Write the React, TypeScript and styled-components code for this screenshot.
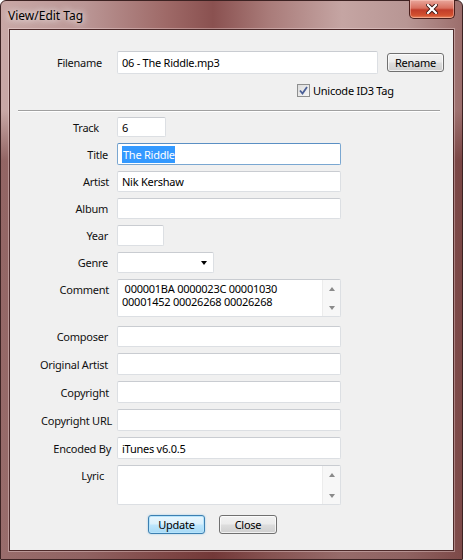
import React from "react";
import styled, { createGlobalStyle, css } from "styled-components";

const GlobalStyle = createGlobalStyle`
  html, body {
    margin: 0;
    padding: 0;
    width: 463px;
    height: 560px;
    overflow: hidden;
    background: #ffffff;
  }
`;

const Window = styled.div`
  width: 463px;
  height: 560px;
  box-sizing: border-box;
  display: flex;
  flex-direction: column;
  padding: 0 8px 8px 8px;
  border: 1px solid #3c2222;
  border-radius: 6px 6px 0 0;
  font-family: "Noto Sans", "Open Sans", sans-serif;
  font-size: 11px;
  color: #000;
  background:
    linear-gradient(180deg, rgba(90, 20, 20, 0) 0px, rgba(90, 20, 20, 0) 110px, rgba(80, 20, 20, 0.45) 160px, rgba(80, 20, 20, 0.4) 100%),
    linear-gradient(90deg, #c9a8a6 0%, #bb9796 18%, #9e6967 36%, #8a5150 46%, #a97b79 58%, #c5a5a3 74%, #b89694 88%, #9c6e6c 100%);
`;

const TitleBar = styled.div`
  height: 28px;
  display: flex;
  justify-content: space-between;
  align-items: flex-start;
  margin-right: -1px;
`;

const Caption = styled.div`
  padding-top: 6px;
  margin-left: -1px;
  font-size: 12px;
  text-shadow: 0 0 6px rgba(255, 255, 255, 0.9), 0 0 10px rgba(255, 255, 255, 0.7);
`;

const CloseButton = styled.div`
  width: 46px;
  height: 19px;
  margin-top: -1px;
  box-sizing: border-box;
  display: flex;
  align-items: center;
  justify-content: center;
  border: 1px solid #4a1f1c;
  border-top: none;
  border-radius: 0 0 5px 5px;
  background: linear-gradient(180deg, #e9a79c 0%, #d8705f 45%, #c13d2a 55%, #d2502f 85%, #e98a5f 100%);
  box-shadow: inset 0 0 0 1px rgba(255, 210, 200, 0.45);
`;

const Client = styled.div`
  flex: 1;
  display: flex;
  flex-direction: column;
  background: #f0f0f0;
  border: 1px solid #4e2a2a;
  box-shadow: 0 0 0 1px rgba(255, 235, 235, 0.35);
  padding-top: 21px;
  letter-spacing: -0.25px;
`;

const Row = styled.div<{ $mt?: number }>`
  display: flex;
  align-items: center;
  margin-top: ${({ $mt = 0 }) => $mt}px;
`;

const TopRow = styled(Row)`
  align-items: flex-start;
`;

const Label = styled.div<{ $pad?: number; $top?: boolean }>`
  width: 102px;
  flex-shrink: 0;
  box-sizing: border-box;
  text-align: right;
  padding-right: ${({ $pad = 0 }) => $pad}px;
  margin-right: 5px;
  white-space: nowrap;
  color: #111;
  ${({ $top }) =>
    $top &&
    css`
      padding-top: 3px;
    `}
`;

const Box = styled.div<{ $w: number; $h: number; $focus?: boolean }>`
  width: ${({ $w }) => $w}px;
  height: ${({ $h }) => $h}px;
  box-sizing: border-box;
  background: #fff;
  border: 1px solid #dcdfe3;
  border-top-color: #c9ccd1;
  border-radius: 2px;
  display: flex;
  align-items: center;
  padding-left: 4px;
  white-space: nowrap;
  overflow: hidden;
  ${({ $focus }) =>
    $focus &&
    css`
      border-color: #7aa7d1;
      border-top-color: #5a8fc4;
    `}
`;

const Selected = styled.span`
  background: #3399ff;
  color: #fff;
  padding: 1px 0 1px 1px;
`;

const Select = styled(Box)`
  justify-content: flex-end;
  padding-right: 6px;
`;

const Memo = styled.div<{ $h: number }>`
  width: 224px;
  height: ${({ $h }) => $h}px;
  box-sizing: border-box;
  background: #fff;
  border: 1px solid #dcdfe3;
  border-top-color: #c9ccd1;
  border-radius: 2px;
  display: flex;
`;

const MemoText = styled.div`
  flex: 1;
  padding: 2px 0 0 4px;
  line-height: 13px;
  white-space: pre;
`;

const ScrollBar = styled.div`
  width: 17px;
  display: flex;
  flex-direction: column;
  justify-content: space-between;
  align-items: center;
  padding: 7px 0 6px;
  background: #f7f7f7;
  border-left: 1px solid #ececec;
`;

const Arrow = styled.div<{ $down?: boolean; $dark?: boolean }>`
  width: 0;
  height: 0;
  border-left: 3.5px solid transparent;
  border-right: 3.5px solid transparent;
  ${({ $down, $dark }) =>
    $down
      ? css`
          border-top: 4px solid ${$dark ? "#000" : "#8a8a8a"};
        `
      : css`
          border-bottom: 4px solid ${$dark ? "#000" : "#8a8a8a"};
        `}
`;

const Button = styled.div<{ $w: number; $default?: boolean }>`
  width: ${({ $w }) => $w}px;
  height: 19px;
  box-sizing: border-box;
  display: flex;
  align-items: center;
  justify-content: center;
  border: 1px solid #707070;
  border-radius: 3px;
  background: linear-gradient(180deg, #f2f2f2 0%, #ebebeb 48%, #dddddd 52%, #cfcfcf 100%);
  box-shadow: inset 0 0 0 1px rgba(255, 255, 255, 0.7);
  ${({ $default }) =>
    $default &&
    css`
      border-color: #3c7fb1;
      background: linear-gradient(180deg, #eaf6fd 0%, #d9f0fc 48%, #bee6fd 52%, #a7d9f5 100%);
      box-shadow: inset 0 0 0 1px #b6e4fc, 0 0 2px rgba(60, 160, 220, 0.5);
    `}
`;

const RenameButton = styled(Button)`
  margin-left: 9px;
`;

const CheckRow = styled.div`
  display: flex;
  align-items: center;
  gap: 3px;
  margin-top: 9px;
  padding-left: 287px;
  height: 15px;
`;

const CheckBox = styled.div`
  width: 13px;
  height: 13px;
  box-sizing: border-box;
  border: 1px solid #8e8f8f;
  background: linear-gradient(135deg, #dcdcdc 0%, #f6f6f6 100%);
  display: flex;
  align-items: center;
  justify-content: center;
`;

const Separator = styled.div`
  height: 1px;
  margin: 12px 13px 0 8px;
  background: #a0a0a0;
  border-bottom: 1px solid #ffffff;
`;

const Fields = styled.div`
  display: flex;
  flex-direction: column;
  margin-top: 5px;
`;

const ButtonBar = styled.div`
  display: flex;
  gap: 14px;
  padding-left: 138px;
  margin-top: 10px;
`;

type Field = {
  label: string;
  pad: number;
  h: number;
  mt: number;
  value?: string;
};

const fields: Field[] = [
  { label: "Composer", pad: 4, mt: 9, h: 21 },
  { label: "Original Artist", pad: 4, mt: 6, h: 22 },
  { label: "Copyright", pad: 3, mt: 6, h: 22 },
  { label: "Copyright URL", pad: 0, mt: 6, h: 22 },
  { label: "Encoded By", pad: 1, mt: 6, h: 22, value: "iTunes v6.0.5" },
];

const Scroll = () => (
  <ScrollBar>
    <Arrow />
    <Arrow $down />
  </ScrollBar>
);

const App = () => {
  return (
    <>
      <GlobalStyle />
      <Window>
        <TitleBar>
          <Caption>View/Edit Tag</Caption>
          <CloseButton>
            <svg width="12" height="10" viewBox="0 0 12 10">
              <path d="M2 1 L10 9 M10 1 L2 9" stroke="#3a1410" strokeWidth="4" strokeLinecap="square" />
              <path d="M2 1 L10 9 M10 1 L2 9" stroke="#ffffff" strokeWidth="2.2" strokeLinecap="square" />
            </svg>
          </CloseButton>
        </TitleBar>
        <Client>
          <Row>
            <Label $pad={10}>Filename</Label>
            <Box $w={261} $h={23}>06 - The Riddle.mp3</Box>
            <RenameButton $w={57}>Rename</RenameButton>
          </Row>
          <CheckRow>
            <CheckBox>
              <svg width="9" height="9" viewBox="0 0 9 9">
                <path d="M1 4.5 L3.5 7.5 L8 1" fill="none" stroke="#4a5f97" strokeWidth="1.8" />
              </svg>
            </CheckBox>
            Unicode ID3 Tag
          </CheckRow>
          <Separator />
          <Fields>
            <Row>
              <Label $pad={13}>Track</Label>
              <Box $w={49} $h={20}>6</Box>
            </Row>
            <Row $mt={6}>
              <Label $pad={4}>Title</Label>
              <Box $w={224} $h={22} $focus>
                <Selected>The Riddle</Selected>
              </Box>
            </Row>
            <Row $mt={6}>
              <Label $pad={3}>Artist</Label>
              <Box $w={224} $h={21}>Nik Kershaw</Box>
            </Row>
            <Row $mt={6}>
              <Label $pad={4}>Album</Label>
              <Box $w={224} $h={21} />
            </Row>
            <Row $mt={6}>
              <Label $pad={4}>Year</Label>
              <Box $w={47} $h={21} />
            </Row>
            <Row $mt={6}>
              <Label $pad={4}>Genre</Label>
              <Select $w={97} $h={21}>
                <Arrow $down $dark />
              </Select>
            </Row>
            <TopRow $mt={6}>
              <Label $pad={3} $top>
                Comment
              </Label>
              <Memo $h={38}>
                <MemoText>{" 000001BA 0000023C 00001030\n00001452 00026268 00026268"}</MemoText>
                <Scroll />
              </Memo>
            </TopRow>
            {fields.map((f) => (
              <Row key={f.label} $mt={f.mt}>
                <Label $pad={f.pad}>{f.label}</Label>
                <Box $w={224} $h={f.h}>
                  {f.value}
                </Box>
              </Row>
            ))}
            <TopRow $mt={6}>
              <Label $pad={8} $top>
                Lyric
              </Label>
              <Memo $h={40}>
                <MemoText />
                <Scroll />
              </Memo>
            </TopRow>
          </Fields>
          <ButtonBar>
            <Button $w={57} $default>
              Update
            </Button>
            <Button $w={58}>Close</Button>
          </ButtonBar>
        </Client>
      </Window>
    </>
  );
};

export default App;
